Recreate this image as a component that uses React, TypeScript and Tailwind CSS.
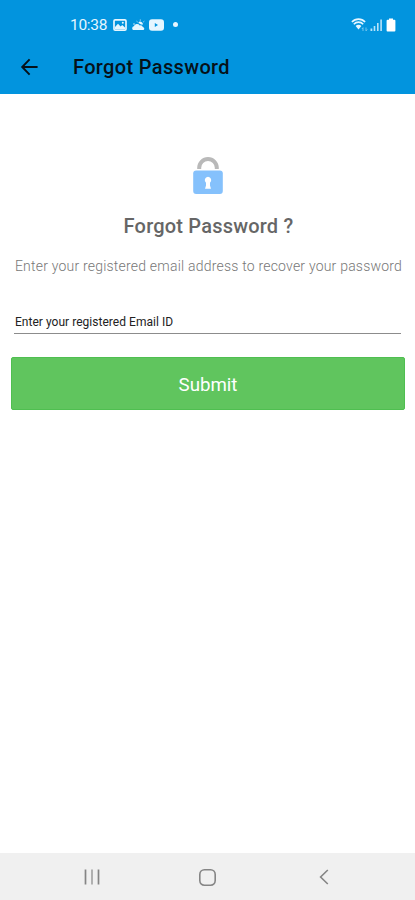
import { useState } from "react";

function StatusBar() {
  return (
    <div className="flex h-[49px] items-center pl-[70px] pr-[19px] text-[#e6f6ff]">
      <span className="w-[38px] whitespace-nowrap pt-0.5 text-[15.5px] leading-none tracking-[-0.3px]">10:38</span>
      <svg className="ml-[5px]" width="14" height="12" viewBox="0 0 14 12" fill="none">
        <rect x="1" y="0.9" width="12" height="10.2" rx="1.2" stroke="currentColor" strokeWidth="1.7" />
        <path d="M2 10V8l3-3.2 2.6 2.6 1.6-1.5L12 8.6V10z" fill="currentColor" />
        <circle cx="9.8" cy="3.8" r="1" fill="currentColor" />
      </svg>
      <svg className="ml-[5px]" width="13" height="12" viewBox="0 0 13 12" fill="currentColor">
        <path d="M1 11a2.2 2.2 0 0 1 .8-3.8 3.4 3.4 0 0 1 6-.8 2.4 2.4 0 0 1 3 1.6 1.6 1.6 0 0 1 .6 3z" />
        <path d="M6.3 3.9a2.3 2.3 0 0 1 4.2 2.2 3.6 3.6 0 0 0-2-.9 4.5 4.5 0 0 0-2.2-1.3z" />
        <path d="M8.3 0.5v1.2M4.6 2.2l1 .8M12.3 2.2l-1 .8M1 5h2" stroke="currentColor" strokeWidth="0.8" />
      </svg>
      <svg className="ml-1" width="15" height="12" viewBox="0 0 15 12">
        <rect width="15" height="11.4" y="0.3" rx="3" fill="currentColor" />
        <path d="M5.8 3.9v4.2L9 6z" fill="#0294de" />
      </svg>
      <span className="ml-[9px] size-[5px] rounded-full bg-current" />
      <div className="ml-auto flex items-center">
        <svg width="18" height="14" viewBox="0 0 18 14" fill="none" stroke="currentColor">
          <path d="M0.9 4a9 9 0 0 1 13.2 0M2.8 6.2a6.4 6.4 0 0 1 9.4 0" strokeWidth="1.6" />
          <path d="M4.6 8a4 4 0 0 1 5.8 0l-2.9 3.4z" fill="currentColor" stroke="none" />
          <path d="M12 13V9.7l-1.1 1.2M15 9.5v3.3l1.3-1.3" strokeWidth="0.7" opacity="0.7" />
        </svg>
        <svg className="ml-px" width="13" height="14" viewBox="0 0 13 14" fill="currentColor">
          <path d="M0.5 10.5h1.8V13H.5zM3.7 8h1.6v5H3.7zM7 5h1.6v8H7zM10.3 1.5h1.6V13h-1.6z" opacity="0.8" />
        </svg>
        <svg className="ml-[3px]" width="10" height="14" viewBox="0 0 10 14" fill="#fff">
          <path d="M3 .5h4v1.3h1.5q.9 0 .9.9v9.8q0 .9-.9.9h-7q-.9 0-.9-.9V2.7q0-.9.9-.9H3z" />
        </svg>
      </div>
    </div>
  );
}

function AppBar() {
  return (
    <div className="flex h-[45px] items-center pb-[9px] pl-5 text-[#061119]">
      <button type="button" aria-label="Back" className="mr-[34px]">
        <svg width="19" height="18" viewBox="0 0 19 18" fill="none" stroke="currentColor" strokeWidth="1.9">
          <path d="M9.6 1.4 2.2 9l7.4 7.6M2.4 9h15.2" />
        </svg>
      </button>
      <h1 className="whitespace-nowrap text-[20px] font-medium leading-none tracking-[0.35px]">Forgot Password</h1>
    </div>
  );
}

function LockIcon() {
  return (
    <svg width="32" height="40" viewBox="0 0 32 40" fill="none">
      <path d="M7.2 14v-1.2a8.8 8.8 0 0 1 17.6 0V14" stroke="#b9b9b9" strokeWidth="4" />
      <rect x="1.2" y="15.5" width="29.6" height="23.5" rx="3" fill="#85c1fc" />
      <path d="M16 21.8a3.4 3.4 0 0 1 2 6v2.8l1 3.2h-6l1-3.2v-2.8a3.4 3.4 0 0 1 2-6z" fill="#fff" />
    </svg>
  );
}

function NavBar() {
  return (
    <nav className="flex h-[47px] items-center bg-[#f0f0f0] px-[83px] pt-px text-[#858585]">
      <svg width="18" height="18" viewBox="0 0 18 18" stroke="currentColor" strokeWidth="1.7">
        <path d="M2.5 1.5v15M15.5 1.5v15" />
        <path d="M9 1.5v15" opacity="0.7" />
      </svg>
      <svg className="ml-[97px]" width="19" height="19" viewBox="0 0 19 19" fill="none" stroke="currentColor" strokeWidth="1.6">
        <rect x="1.8" y="1.8" width="15.4" height="15.4" rx="4.6" />
      </svg>
      <svg className="ml-[101px] shrink-0" width="12" height="18" viewBox="0 0 12 18" fill="none" stroke="currentColor" strokeWidth="1.6">
        <path d="M9.8 2 2.6 9l7.2 7" />
      </svg>
    </nav>
  );
}

export default function App() {
  const [email, setEmail] = useState("");

  return (
    <div className="flex h-[900px] w-[415px] flex-col overflow-hidden bg-white font-[Roboto,sans-serif]">
      <header className="bg-[#0294de]">
        <StatusBar />
        <AppBar />
      </header>

      <main className="flex flex-1 flex-col items-center pt-[61px]">
        <LockIcon />
        <h2 className="mt-[21px] whitespace-nowrap pl-0.5 text-[20px] font-medium leading-5 tracking-[0.2px] text-[#666]">
          Forgot Password ?
        </h2>
        <p className="mt-5 whitespace-nowrap pl-0.5 text-[14px] font-light leading-5 tracking-[0.21px] text-[#777]">
          Enter your registered email address to recover your password
        </p>
        <input
          type="email"
          value={email}
          onChange={(e) => setEmail(e.target.value)}
          placeholder="Enter your registered Email ID"
          className="mt-[36px] h-[22px] w-[387px] border-b border-[#8c8c8c] pb-0.5 pl-px text-[12px] tracking-[0.03px] text-[#222] outline-none placeholder:text-[#222]"
        />
        <button type="button" className="mt-[23px] h-[53px] w-[394px] rounded-[2px] border border-[#4fbf50] bg-[#60c55e] pl-px pt-1 text-[18.7px] text-white">
          Submit
        </button>
      </main>

      <NavBar />
    </div>
  );
}
